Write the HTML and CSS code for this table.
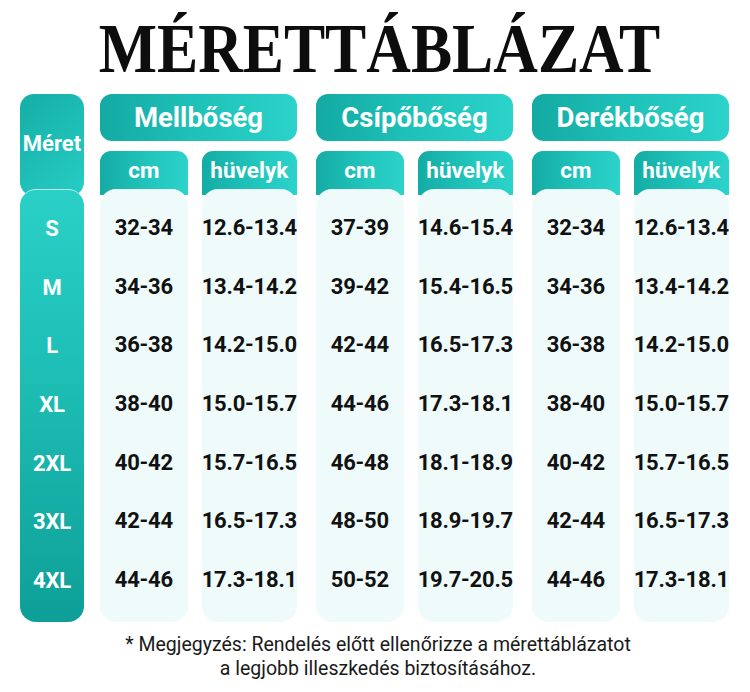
FILE: index.html
```html
<!DOCTYPE html>
<html lang="hu">
<head>
<meta charset="utf-8">
<title>Mérettáblázat</title>
<link rel="stylesheet" href="styles.css">
</head>
<body>
<div class="page">
  <h1 class="title">MÉRETTÁBLÁZAT</h1>
  <div class="chart">
    <div class="size-col">
      <div class="size-head">Méret</div>
      <div class="size-body">
        <div class="row">S</div>
        <div class="row">M</div>
        <div class="row">L</div>
        <div class="row">XL</div>
        <div class="row">2XL</div>
        <div class="row">3XL</div>
        <div class="row">4XL</div>
      </div>
    </div>
    <div class="groups">
      <div class="group">
        <div class="group-head">Mellbőség</div>
        <div class="subs">
          <div class="sub">
            <div class="sub-head">cm</div>
            <div class="sub-body">
              <div class="row">32-34</div>
              <div class="row">34-36</div>
              <div class="row">36-38</div>
              <div class="row">38-40</div>
              <div class="row">40-42</div>
              <div class="row">42-44</div>
              <div class="row">44-46</div>
            </div>
          </div>
          <div class="sub">
            <div class="sub-head">hüvelyk</div>
            <div class="sub-body">
              <div class="row">12.6-13.4</div>
              <div class="row">13.4-14.2</div>
              <div class="row">14.2-15.0</div>
              <div class="row">15.0-15.7</div>
              <div class="row">15.7-16.5</div>
              <div class="row">16.5-17.3</div>
              <div class="row">17.3-18.1</div>
            </div>
          </div>
        </div>
      </div>
      <div class="group">
        <div class="group-head">Csípőbőség</div>
        <div class="subs">
          <div class="sub">
            <div class="sub-head">cm</div>
            <div class="sub-body">
              <div class="row">37-39</div>
              <div class="row">39-42</div>
              <div class="row">42-44</div>
              <div class="row">44-46</div>
              <div class="row">46-48</div>
              <div class="row">48-50</div>
              <div class="row">50-52</div>
            </div>
          </div>
          <div class="sub">
            <div class="sub-head">hüvelyk</div>
            <div class="sub-body">
              <div class="row">14.6-15.4</div>
              <div class="row">15.4-16.5</div>
              <div class="row">16.5-17.3</div>
              <div class="row">17.3-18.1</div>
              <div class="row">18.1-18.9</div>
              <div class="row">18.9-19.7</div>
              <div class="row">19.7-20.5</div>
            </div>
          </div>
        </div>
      </div>
      <div class="group">
        <div class="group-head">Derékbőség</div>
        <div class="subs">
          <div class="sub">
            <div class="sub-head">cm</div>
            <div class="sub-body">
              <div class="row">32-34</div>
              <div class="row">34-36</div>
              <div class="row">36-38</div>
              <div class="row">38-40</div>
              <div class="row">40-42</div>
              <div class="row">42-44</div>
              <div class="row">44-46</div>
            </div>
          </div>
          <div class="sub">
            <div class="sub-head">hüvelyk</div>
            <div class="sub-body">
              <div class="row">12.6-13.4</div>
              <div class="row">13.4-14.2</div>
              <div class="row">14.2-15.0</div>
              <div class="row">15.0-15.7</div>
              <div class="row">15.7-16.5</div>
              <div class="row">16.5-17.3</div>
              <div class="row">17.3-18.1</div>
            </div>
          </div>
        </div>
      </div>
    </div>
  </div>
  <p class="note">* Megjegyzés: Rendelés előtt ellenőrizze a mérettáblázatot<br>a legjobb illeszkedés biztosításához.</p>
</div>
</body>
</html>
```

FILE: styles.css
```css
html, body {
  margin: 0;
  padding: 0;
  background: #ffffff;
}

.page {
  width: 750px;
  height: 692px;
  font-family: Roboto, "Liberation Sans", sans-serif;
  color: #111;
}

.title {
  margin: 0;
  padding: 16px 0 0 10px;
  height: 68px;
  line-height: 66px;
  font-family: "Liberation Serif", serif;
  font-weight: 700;
  font-size: 69px;
  letter-spacing: 0;
  text-align: center;
  color: #0d0d0d;
  transform: scaleX(0.895);
}

.chart {
  display: flex;
  margin-top: 10px;
  padding-left: 20px;
}

.size-col {
  width: 64px;
  margin-right: 16px;
  display: flex;
  flex-direction: column;
}

.size-head {
  height: 102px;
  box-sizing: border-box;
  padding-bottom: 4px;
  border-radius: 14px;
  background: linear-gradient(135deg, #14aea6 0%, #27cdc4 100%);
  color: #fff;
  font-weight: 700;
  font-size: 22px;
  display: flex;
  align-items: center;
  justify-content: center;
}

.size-body {
  position: relative;
  margin-top: -7px;
  height: 433px;
  box-sizing: border-box;
  padding: 9px 0 13px;
  border-radius: 16px;
  border-top: 1.5px solid rgba(255, 255, 255, 0.75);
  background: linear-gradient(180deg, #2ad0c6 0%, #1dbdb4 45%, #0e9f97 100%);
  color: #fff;
}

.size-body .row {
  font-size: 22px;
}

.groups {
  display: flex;
  gap: 19px;
}

.group {
  width: 197px;
  display: flex;
  flex-direction: column;
}

.group-head {
  height: 47px;
  border-radius: 12px;
  background: linear-gradient(90deg, #13aaa3 0%, #1fc2b9 50%, #2bd3ca 100%);
  color: #fff;
  font-weight: 700;
  font-size: 27.5px;
  display: flex;
  align-items: center;
  justify-content: center;
}

.subs {
  display: flex;
  gap: 14px;
  margin-top: 10px;
}

.sub {
  flex: 1;
  display: flex;
  flex-direction: column;
}

.sub-head {
  height: 44px;
  box-sizing: border-box;
  padding-bottom: 6px;
  border-radius: 11px 11px 0 0;
  background: linear-gradient(90deg, #14aca5 0%, #22c7be 60%, #2cd3ca 100%);
  color: #fff;
  font-weight: 700;
  font-size: 22.5px;
  display: flex;
  align-items: center;
  justify-content: center;
}

.sub-body {
  position: relative;
  margin-top: -6px;
  box-sizing: border-box;
  height: 433px;
  padding: 9px 0 13px;
  border-radius: 16px;
  background: #effbfb;
}

.row {
  height: 58.7px;
  display: flex;
  align-items: center;
  justify-content: center;
  font-weight: 700;
  font-size: 22px;
  letter-spacing: -0.2px;
  white-space: nowrap;
}

.note {
  margin: 11px 0 0;
  padding-left: 6px;
  font-size: 19.5px;
  line-height: 24px;
  text-align: center;
  color: #1a1a1a;
}
```
